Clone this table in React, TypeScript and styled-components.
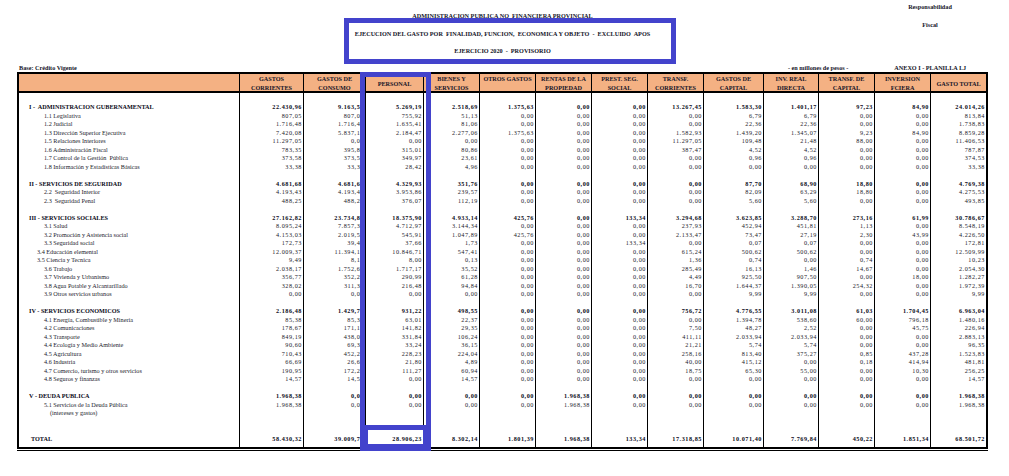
import React from "react";
import styled, { createGlobalStyle } from "styled-components";

const GlobalStyle = createGlobalStyle`
  *, *::before, *::after { box-sizing: border-box; }
  html, body { margin: 0; padding: 0; background: #ffffff; }
  body {
    font-family: "Liberation Serif", "Times New Roman", serif;
    color: #111;
  }
`;

const COLS =
  "220px 64px 62px 58px 56px 56px 56px 56px 56px 60px 55px 56px 56px 56px";
const BLUE = "#4343cc";
const FS = "6.2px";

const Page = styled.div`
  position: relative;
  width: 1009px;
  height: 476px;
  padding: 0 21px 0 17px;
  overflow: hidden;
  background: #fff;
`;

const TopGrid = styled.div`
  display: grid;
  grid-template-columns: 1fr 340px 1fr;
  height: 61px;
`;

const TitleStack = styled.div`
  grid-column: 2;
  display: flex;
  flex-direction: column;
  align-items: center;
`;

const TitleLine = styled.div<{ $top: number }>`
  margin-top: ${(p) => p.$top}px;
  height: 8px;
  line-height: 8px;
  font-size: ${FS};
  font-weight: 700;
  white-space: pre;
  color: #141428;
`;

const NoteStack = styled.div`
  grid-column: 3;
  justify-self: end;
  width: 60px;
  margin-right: 28px;
  display: flex;
  flex-direction: column;
  align-items: center;
`;

const InfoRow = styled.div`
  display: flex;
  align-items: center;
  height: 11px;
  line-height: 11px;
  font-size: ${FS};
  font-weight: 700;
  color: #141428;
  padding: 1px 22px 0 2px;
  white-space: pre;
`;

const Units = styled.span`
  margin-left: auto;
`;

const Annex = styled.span`
  margin-left: 46px;
`;

const Table = styled.div`
  border: 2px solid #000;
`;

const HeaderRow = styled.div`
  display: grid;
  grid-template-columns: ${COLS};
  height: 19px;
  background: #f4b183;
  border-bottom: 2px solid #000;
`;

type HeadMode = "split" | "middle" | "top";

const HeadCell = styled.div<{ $mode: HeadMode }>`
  border-left: 1px solid #000;
  display: flex;
  flex-direction: column;
  align-items: center;
  justify-content: ${(p) =>
    p.$mode === "split"
      ? "space-between"
      : p.$mode === "middle"
      ? "center"
      : "flex-start"};
  padding: 1px 0 0;
  font-size: ${FS};
  font-weight: 700;
  line-height: 7px;
  color: #141428;
  white-space: pre;
  &:first-child {
    border-left: none;
  }
`;

const Row = styled.div<{ $h?: number }>`
  display: grid;
  grid-template-columns: ${COLS};
  height: ${(p) => p.$h ?? 8.5}px;
`;

const LabelCell = styled.div<{ $indent: number; $bold?: boolean }>`
  padding-left: ${(p) => p.$indent}px;
  font-size: ${FS};
  line-height: 8.5px;
  font-weight: ${(p) => (p.$bold ? 700 : 400)};
  color: ${(p) => (p.$bold ? "#0a0a18" : "#22222c")};
  white-space: pre;
`;

const NumCell = styled.div<{ $bold?: boolean }>`
  border-left: 1px solid #000;
  text-align: right;
  padding-right: 1px;
  font-size: ${FS};
  line-height: 8.5px;
  letter-spacing: 0.55px;
  font-weight: ${(p) => (p.$bold ? 700 : 400)};
  color: ${(p) => (p.$bold ? "#0a0a18" : "#22222c")};
  white-space: nowrap;
`;

const DoubleRule = styled.div`
  height: 1px;
  margin-top: 1px;
  background: #000;
`;

const TitleHighlight = styled.div`
  position: absolute;
  left: 344px;
  top: 18px;
  width: 332px;
  height: 46px;
  border: 5px solid ${BLUE};
  pointer-events: none;
`;

const ColumnHighlight = styled.div`
  position: absolute;
  left: 360px;
  top: 72px;
  width: 71px;
  height: 358px;
  border: 5px solid ${BLUE};
  pointer-events: none;
`;

const TotalHighlight = styled.div`
  position: absolute;
  left: 360px;
  top: 425px;
  width: 71px;
  height: 26px;
  border-style: solid;
  border-color: ${BLUE};
  border-width: 5px 8px 7px 8px;
  pointer-events: none;
`;

const headers: { lines: string[]; mode: HeadMode }[] = [
  { lines: [], mode: "top" },
  { lines: ["GASTOS", "CORRIENTES"], mode: "split" },
  { lines: ["GASTOS DE", "CONSUMO"], mode: "split" },
  { lines: ["PERSONAL"], mode: "middle" },
  { lines: ["BIENES Y", "SERVICIOS"], mode: "split" },
  { lines: ["OTROS GASTOS"], mode: "top" },
  { lines: ["RENTAS DE LA", "PROPIEDAD"], mode: "split" },
  { lines: ["PREST. SEG.", "SOCIAL"], mode: "split" },
  { lines: ["TRANSF.", "CORRIENTES"], mode: "split" },
  { lines: ["GASTOS DE", "CAPITAL"], mode: "split" },
  { lines: ["INV. REAL", "DIRECTA"], mode: "split" },
  { lines: ["TRANSF. DE", "CAPITAL"], mode: "split" },
  { lines: ["INVERSION", "FCIERA"], mode: "split" },
  { lines: ["GASTO TOTAL"], mode: "middle" },
];

type Kind = "g" | "s" | "s2" | "note" | "blank" | "total";
type DataRow = { k: Kind; l?: string; v?: string[] };

const Z = "0,00";
const rows: DataRow[] = [
  { k: "g", l: "I -  ADMINISTRACION GUBERNAMENTAL", v: ["22.430,96", "9.163,51", "5.269,19", "2.518,69", "1.375,63", Z, Z, "13.267,45", "1.583,30", "1.401,17", "97,23", "84,90", "24.014,26"] },
  { k: "s", l: "1.1 Legislativa", v: ["807,05", "807,05", "755,92", "51,13", Z, Z, Z, Z, "6,79", "6,79", Z, Z, "813,84"] },
  { k: "s", l: "1.2 Judicial", v: ["1.716,48", "1.716,47", "1.635,41", "81,06", Z, Z, Z, Z, "22,36", "22,36", Z, Z, "1.738,83"] },
  { k: "s", l: "1.3 Dirección Superior Ejecutiva", v: ["7.420,08", "5.837,16", "2.184,47", "2.277,06", "1.375,63", Z, Z, "1.582,93", "1.439,20", "1.345,07", "9,23", "84,90", "8.859,28"] },
  { k: "s", l: "1.5 Relaciones Interiores", v: ["11.297,05", Z, Z, Z, Z, Z, Z, "11.297,05", "109,48", "21,48", "88,00", Z, "11.406,53"] },
  { k: "s", l: "1.6 Administración Fiscal", v: ["783,35", "395,87", "315,01", "80,86", Z, Z, Z, "387,47", "4,52", "4,52", Z, Z, "787,87"] },
  { k: "s", l: "1.7 Control de la Gestión  Pública", v: ["373,58", "373,58", "349,97", "23,61", Z, Z, Z, Z, "0,96", "0,96", Z, Z, "374,53"] },
  { k: "s", l: "1.8 Información y Estadísticas Básicas", v: ["33,38", "33,38", "28,42", "4,96", Z, Z, Z, Z, Z, Z, Z, Z, "33,38"] },
  { k: "blank" },
  { k: "g", l: "II - SERVICIOS DE SEGURIDAD", v: ["4.681,68", "4.681,69", "4.329,93", "351,76", Z, Z, Z, Z, "87,70", "68,90", "18,80", Z, "4.769,38"] },
  { k: "s", l: "2.2  Seguridad Interior", v: ["4.193,43", "4.193,43", "3.953,86", "239,57", Z, Z, Z, Z, "82,09", "63,29", "18,80", Z, "4.275,53"] },
  { k: "s", l: "2.3  Seguridad Penal", v: ["488,25", "488,26", "376,07", "112,19", Z, Z, Z, Z, "5,60", "5,60", Z, Z, "493,85"] },
  { k: "blank" },
  { k: "g", l: "III - SERVICIOS SOCIALES", v: ["27.162,82", "23.734,80", "18.375,90", "4.933,14", "425,76", Z, "133,34", "3.294,68", "3.623,85", "3.288,70", "273,16", "61,99", "30.786,67"] },
  { k: "s", l: "3.1 Salud", v: ["8.095,24", "7.857,31", "4.712,97", "3.144,34", Z, Z, Z, "237,93", "452,94", "451,81", "1,13", Z, "8.548,19"] },
  { k: "s", l: "3.2 Promoción y Asistencia social", v: ["4.153,03", "2.019,56", "545,91", "1.047,89", "425,76", Z, Z, "2.133,47", "73,47", "27,19", "2,30", "43,99", "4.226,50"] },
  { k: "s", l: "3.3 Seguridad social", v: ["172,73", "39,40", "37,66", "1,73", Z, Z, "133,34", Z, "0,07", "0,07", Z, Z, "172,81"] },
  { k: "s2", l: "3.4 Educación elemental", v: ["12.009,37", "11.394,12", "10.846,71", "547,41", Z, Z, Z, "615,24", "500,62", "500,62", Z, Z, "12.509,99"] },
  { k: "s2", l: "3.5 Ciencia y Tecnica", v: ["9,49", "8,13", "8,00", "0,13", Z, Z, Z, "1,36", "0,74", Z, "0,74", Z, "10,23"] },
  { k: "s", l: "3.6 Trabajo", v: ["2.038,17", "1.752,69", "1.717,17", "35,52", Z, Z, Z, "285,49", "16,13", "1,46", "14,67", Z, "2.054,30"] },
  { k: "s", l: "3.7 Vivienda y Urbanismo", v: ["356,77", "352,27", "290,99", "61,28", Z, Z, Z, "4,49", "925,50", "907,50", Z, "18,00", "1.282,27"] },
  { k: "s", l: "3.8 Agua Potable y Alcantarillado", v: ["328,02", "311,32", "216,48", "94,84", Z, Z, Z, "16,70", "1.644,37", "1.390,05", "254,32", Z, "1.972,39"] },
  { k: "s", l: "3.9 Otros servicios urbanos", v: [Z, Z, Z, Z, Z, Z, Z, Z, "9,99", "9,99", Z, Z, "9,99"] },
  { k: "blank" },
  { k: "g", l: "IV - SERVICIOS ECONOMICOS", v: ["2.186,48", "1.429,77", "931,22", "498,55", Z, Z, Z, "756,72", "4.776,55", "3.011,08", "61,03", "1.704,45", "6.963,04"] },
  { k: "s", l: "4.1 Energía, Combustible y Minería", v: ["85,38", "85,38", "63,01", "22,37", Z, Z, Z, Z, "1.394,78", "538,60", "60,00", "796,18", "1.480,16"] },
  { k: "s", l: "4.2 Comunicaciones", v: ["178,67", "171,17", "141,82", "29,35", Z, Z, Z, "7,50", "48,27", "2,52", Z, "45,75", "226,94"] },
  { k: "s", l: "4.3 Transporte", v: ["849,19", "438,08", "331,84", "106,24", Z, Z, Z, "411,11", "2.033,94", "2.033,94", Z, Z, "2.883,13"] },
  { k: "s", l: "4.4 Ecología y Medio Ambiente", v: ["90,60", "69,39", "33,24", "36,15", Z, Z, Z, "21,21", "5,74", "5,74", Z, Z, "96,35"] },
  { k: "s", l: "4.5 Agricultura", v: ["710,43", "452,27", "228,23", "224,04", Z, Z, Z, "258,16", "813,40", "375,27", "0,85", "437,28", "1.523,83"] },
  { k: "s", l: "4.6 Industria", v: ["66,69", "26,69", "21,80", "4,89", Z, Z, Z, "40,00", "415,12", Z, "0,18", "414,94", "481,81"] },
  { k: "s", l: "4.7 Comercio, turismo y otros servicios", v: ["190,95", "172,21", "111,27", "60,94", Z, Z, Z, "18,75", "65,30", "55,00", Z, "10,30", "256,25"] },
  { k: "s", l: "4.8 Seguros y finanzas", v: ["14,57", "14,57", Z, "14,57", Z, Z, Z, Z, Z, Z, Z, Z, "14,57"] },
  { k: "blank" },
  { k: "g", l: "V - DEUDA PUBLICA", v: ["1.968,38", Z, Z, Z, Z, "1.968,38", Z, Z, Z, Z, Z, Z, "1.968,38"] },
  { k: "s", l: "5.1 Servicios de la Deuda Pública", v: ["1.968,38", Z, Z, Z, Z, "1.968,38", Z, Z, Z, Z, Z, Z, "1.968,38"] },
  { k: "note", l: "(intereses y gastos)" },
  { k: "blank" },
  { k: "blank" },
  { k: "total", l: "TOTAL", v: ["58.430,32", "39.009,76", "28.906,23", "8.302,14", "1.801,39", "1.968,38", "133,34", "17.318,85", "10.071,40", "7.769,84", "450,22", "1.851,34", "68.501,72"] },
];

const indentFor: Record<Kind, number> = {
  g: 10,
  s: 25,
  s2: 18,
  note: 31,
  blank: 0,
  total: 12,
};

const EMPTY = Array.from({ length: 13 }, () => "");

function TableLine({ row, h }: { row: DataRow; h?: number }) {
  const bold = row.k === "g" || row.k === "total";
  const values = row.v ?? EMPTY;
  return (
    <Row $h={h}>
      <LabelCell $indent={indentFor[row.k]} $bold={bold}>
        {row.l ?? ""}
      </LabelCell>
      {values.map((val, i) => (
        <NumCell key={i} $bold={bold}>
          {val}
        </NumCell>
      ))}
    </Row>
  );
}

export default function App() {
  return (
    <>
      <GlobalStyle />
      <Page>
        <TopGrid>
          <TitleStack>
            <TitleLine $top={12}>ADMINISTRACION PUBLICA NO  FINANCIERA PROVINCIAL</TitleLine>
            <TitleLine $top={10}>
              EJECUCION DEL GASTO POR  FINALIDAD, FUNCION,  ECONOMICA Y OBJETO  -  EXCLUIDO  APOS
            </TitleLine>
            <TitleLine $top={9}>EJERCICIO 2020  -  PROVISORIO</TitleLine>
          </TitleStack>
          <NoteStack>
            <TitleLine $top={3}>Responsabilidad</TitleLine>
            <TitleLine $top={10}>Fiscal</TitleLine>
          </NoteStack>
        </TopGrid>
        <InfoRow>
          <span>Base: Crédito Vigente</span>
          <Units>- en millones de pesos -</Units>
          <Annex>ANEXO I - PLANILLA I.J</Annex>
        </InfoRow>
        <Table>
          <HeaderRow>
            {headers.map((h, i) => (
              <HeadCell key={i} $mode={h.mode}>
                {h.lines.map((t, j) => (
                  <span key={j}>{t}</span>
                ))}
              </HeadCell>
            ))}
          </HeaderRow>
          <TableLine row={{ k: "blank" }} h={10} />
          {rows.map((r, i) => (
            <TableLine key={i} row={r} />
          ))}
          <TableLine row={{ k: "blank" }} h={4} />
        </Table>
        <DoubleRule />
        <TitleHighlight />
        <ColumnHighlight />
        <TotalHighlight />
      </Page>
    </>
  );
}
